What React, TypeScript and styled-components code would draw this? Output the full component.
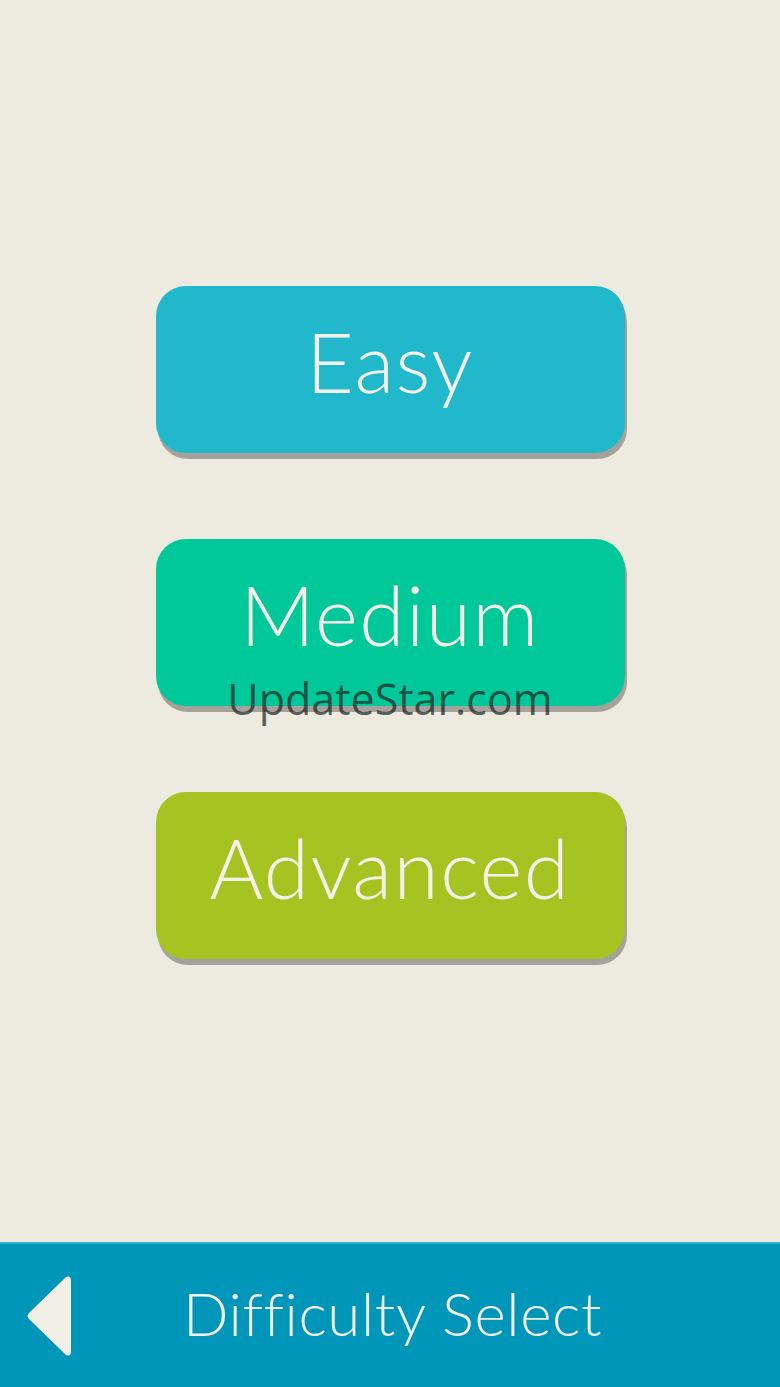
import React from 'react';
import styled, { createGlobalStyle } from 'styled-components';

const GlobalStyle = createGlobalStyle`
  html, body {
    margin: 0;
    padding: 0;
    background: #edeae0;
  }
  #root {
    min-height: 100vh;
  }
`;

const Screen = styled.div`
  position: relative;
  width: 780px;
  height: 1387px;
  display: flex;
  flex-direction: column;
  background: #edeae0;
  font-family: Lato, 'Open Sans', sans-serif;
  overflow: hidden;
`;

const Menu = styled.div`
  flex: 1;
  display: flex;
  flex-direction: column;
  align-items: center;
  gap: 86px;
  padding-top: 286px;
`;

const LevelButton = styled.button<{ $bg: string }>`
  width: 469px;
  height: 167px;
  border: none;
  border-radius: 30px;
  background: ${(p) => p.$bg};
  box-shadow: 2px 6px 0 #a5a29b;
  color: #f3f1e8;
  font-family: inherit;
  font-weight: 300;
  font-size: 82px;
  letter-spacing: 1.5px;
  line-height: 1;
  padding: 0 0 18px;
  cursor: pointer;
`;

const Watermark = styled.div`
  position: absolute;
  top: 669px;
  left: 0;
  right: 0;
  text-align: center;
  font-family: 'Open Sans', sans-serif;
  font-size: 43px;
  color: rgba(35, 38, 38, 0.72);
  pointer-events: none;
`;

const BottomBar = styled.div`
  height: 145px;
  flex-shrink: 0;
  display: flex;
  align-items: center;
  gap: 111px;
  padding: 0 0 0 26px;
  background: #0096b9;
  border-top: 2px solid #2cb3cc;
  box-sizing: border-box;
`;

const BackButton = styled.button`
  display: flex;
  padding: 0;
  border: none;
  background: none;
  cursor: pointer;
`;

const Title = styled.div`
  color: #f1efe6;
  font-weight: 300;
  font-size: 60px;
  letter-spacing: 0.6px;
  padding-bottom: 6px;
`;

const levels = [
  { label: 'Easy', color: '#21b8cc' },
  { label: 'Medium', color: '#00c899' },
  { label: 'Advanced', color: '#a7c322' },
];

export default function App() {
  return (
    <Screen>
      <GlobalStyle />
      <Menu>
        {levels.map((l) => (
          <LevelButton key={l.label} $bg={l.color}>
            {l.label}
          </LevelButton>
        ))}
      </Menu>
      <Watermark>UpdateStar.com</Watermark>
      <BottomBar>
        <BackButton aria-label="Back">
          <svg width="46" height="82" viewBox="0 0 46 82">
            <path
              d="M40 2 Q45 0 45 6 L45 76 Q45 82 40 80 L3 44 Q0 41 3 38 Z"
              fill="#f1efe6"
            />
          </svg>
        </BackButton>
        <Title>Difficulty Select</Title>
      </BottomBar>
    </Screen>
  );
}
